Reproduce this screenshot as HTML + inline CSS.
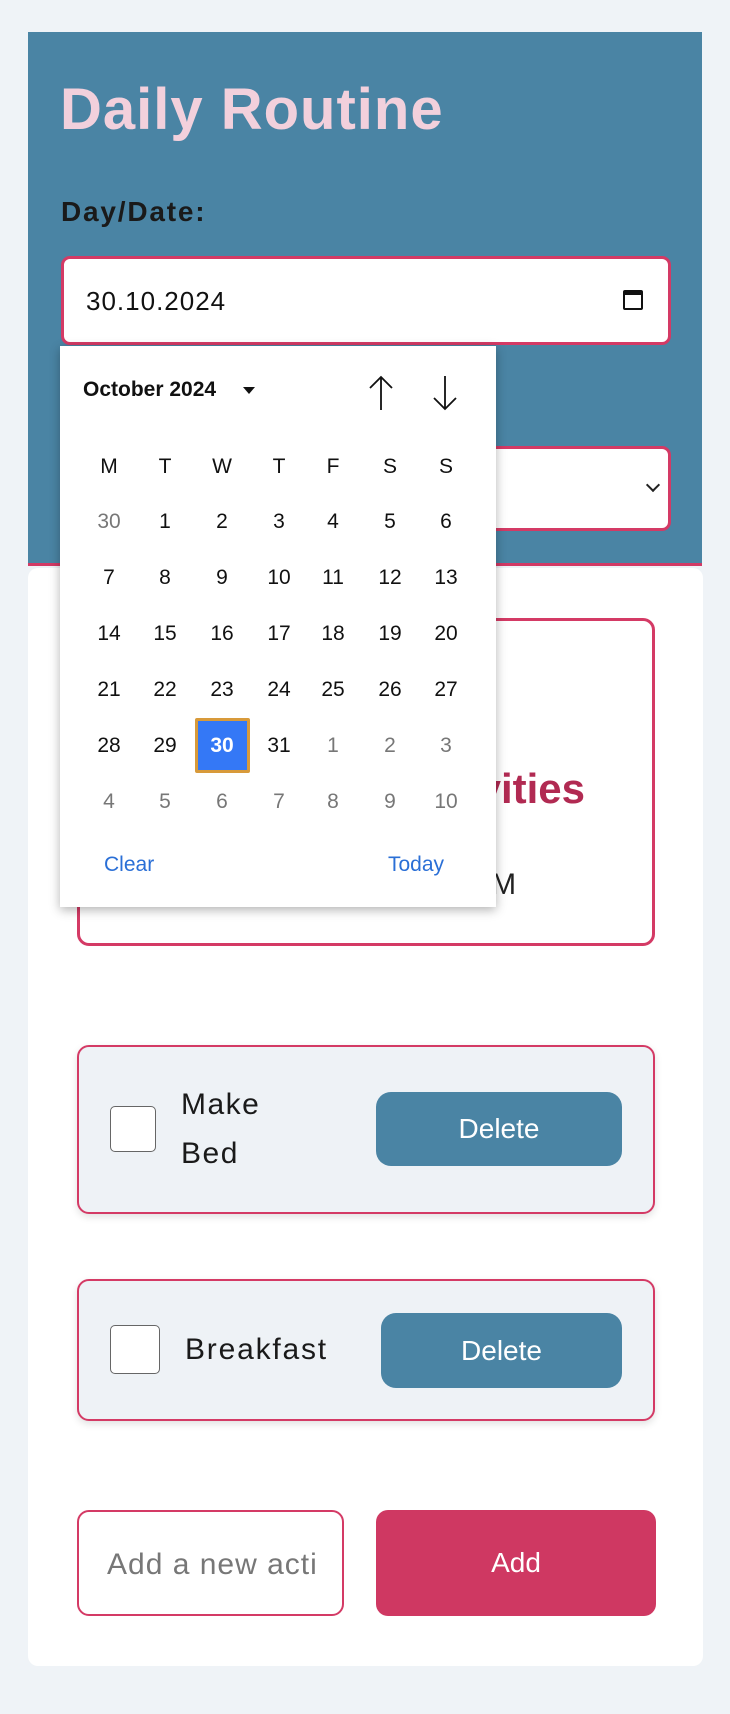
<!DOCTYPE html>
<html><head><style>
*{box-sizing:border-box;margin:0;padding:0}
body{width:730px;height:1714px;background:#eff3f7;position:relative;font-family:"Liberation Sans",sans-serif;overflow:hidden}
.a{position:absolute}
.hdr{left:28px;top:32px;width:674px;height:534px;background:#4a84a4;border-bottom:3px solid #d23a65}
.card{left:28px;top:568px;width:675px;height:1098px;background:#fff;border-radius:10px}
.inp{border:3px solid #d43a65;border-radius:9px;background:#fff}
.task{left:77px;width:578px;background:#eef2f6;border:2px solid #d43a65;border-radius:12px;box-shadow:0 3px 8px rgba(0,0,0,.12)}
.cb{width:46px;height:46px;border:1.5px solid #666;border-radius:5px;background:#fff}
.btn{background:#4a84a4;color:#fff;border-radius:15px;font-size:28px;display:flex;align-items:center;justify-content:center}
.cal{left:60px;top:346px;width:436px;height:561px;background:#fff;box-shadow:0 3px 10px rgba(0,0,0,.3)}
.d{position:absolute;width:50px;text-align:center;font-size:21px;color:#111}
.g{color:#777}
</style></head><body>
<div class="a hdr"></div>
<div class="a" style="left:60px;top:76px;font-size:58px;font-weight:bold;color:#f2d0dc;letter-spacing:1px">Daily Routine</div>
<div class="a" style="left:61px;top:196px;font-size:28px;font-weight:bold;color:#1a1a1a;letter-spacing:1.8px">Day/Date:</div>
<div class="a inp" style="left:61px;top:256px;width:610px;height:89px"></div>
<div class="a" style="left:86px;top:286px;font-size:26px;color:#111;letter-spacing:1px">30.10.2024</div>
<div class="a" style="left:623px;top:290px;width:20px;height:20px;border:2.5px solid #111;border-top-width:5px;border-radius:2px"></div>
<div class="a inp" style="left:61px;top:446px;width:610px;height:85px"></div>
<div class="a" style="left:648px;top:480px;width:10px;height:10px;border-right:2px solid #222;border-bottom:2px solid #222;transform:rotate(45deg)"></div>
<div class="a card"></div>
<div class="a" style="left:77px;top:618px;width:578px;height:328px;border:3px solid #d43a65;border-radius:12px"></div>
<div class="a" style="left:60px;top:765px;width:525px;text-align:right;font-size:42px;font-weight:bold;color:#b12a52">Activities</div>
<div class="a" style="left:400px;top:868px;font-size:30px;color:#222;letter-spacing:1px">8:00 AM</div>
<div class="a task" style="top:1045px;height:169px"></div>
<div class="a cb" style="left:110px;top:1106px"></div>
<div class="a" style="left:181px;top:1080px;font-size:30px;line-height:49px;color:#1a1a1a;letter-spacing:1.5px">Make<br>Bed</div>
<div class="a btn" style="left:376px;top:1092px;width:246px;height:74px">Delete</div>
<div class="a task" style="top:1279px;height:142px"></div>
<div class="a cb" style="left:110px;top:1325px;height:49px;width:50px"></div>
<div class="a" style="left:185px;top:1333px;font-size:30px;color:#1a1a1a;letter-spacing:1.8px">Breakfast</div>
<div class="a btn" style="left:381px;top:1313px;width:241px;height:75px">Delete</div>
<div class="a" style="left:77px;top:1510px;width:267px;height:106px;border:2px solid #d43a65;border-radius:12px;background:#fff;overflow:hidden"><div style="position:absolute;left:28px;top:36px;width:208px;overflow:hidden;font-size:30px;color:#777;white-space:nowrap;letter-spacing:1px">Add a new activity</div></div>
<div class="a btn" style="left:376px;top:1510px;width:280px;height:106px;background:#cf3862;border-radius:12px">Add</div>
<div class="a cal">
<div class="a" style="left:23px;top:32px;font-size:21px;font-weight:bold;color:#111">October 2024</div>
<div class="a" style="left:183px;top:41px;width:0;height:0;border-left:6px solid transparent;border-right:6px solid transparent;border-top:7px solid #111"></div>
<svg class="a" style="left:305px;top:28px" width="100" height="38"><path d="M16 36V3M5 14L16 3L27 14M80 2V35M69 24L80 35L91 24" stroke="#111" stroke-width="1.8" fill="none"/></svg>
<div class="d" style="left:24px;top:109px">M</div><div class="d" style="left:80px;top:109px">T</div><div class="d" style="left:137px;top:109px">W</div><div class="d" style="left:194px;top:109px">T</div><div class="d" style="left:248px;top:109px">F</div><div class="d" style="left:305px;top:109px">S</div><div class="d" style="left:361px;top:109px">S</div>
<div class="a" style="left:135px;top:372px;width:55px;height:55px;background:#3478f6;border:3px solid #d89a3a;border-radius:2px"></div>
<div id="g"></div>
<div class="a" style="left:44px;top:507px;font-size:21px;color:#2a6fd6">Clear</div>
<div class="a" style="left:328px;top:507px;font-size:21px;color:#2a6fd6">Today</div>
</div>
<script>
var xs=[24,80,137,194,248,305,361],ys=[164,220,276,332,388,444];
var days=[];days.push([30,1]);for(var i=1;i<=31;i++)days.push([i,0]);for(i=1;i<=10;i++)days.push([i,1]);
var h='';days.forEach(function(d,k){var r=Math.floor(k/7),c=k%7;var sel=(r==4&&c==2);h+='<div class="d'+(d[1]?' g':'')+'" style="left:'+xs[c]+'px;top:'+ys[r]+'px;'+(sel?'color:#fff;font-weight:bold':'')+'">'+d[0]+'</div>';});
document.getElementById('g').outerHTML=h;
</script>
</body></html>
